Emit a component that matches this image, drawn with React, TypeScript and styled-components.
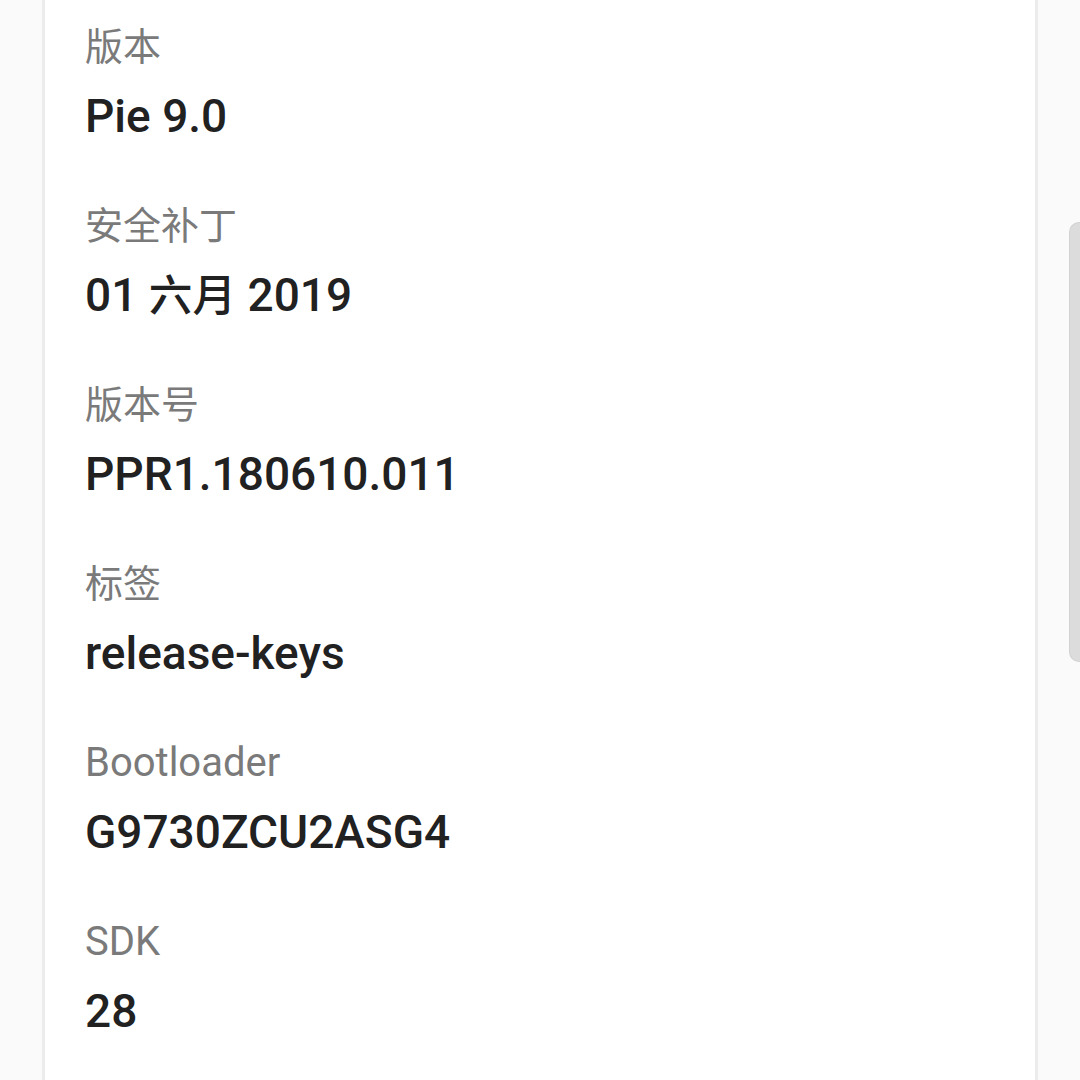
import styled, { createGlobalStyle } from 'styled-components';

const GlobalStyle = createGlobalStyle`
  html, body {
    margin: 0;
    padding: 0;
    background: #fafafa;
    overflow: hidden;
  }
  body {
    font-family: Roboto, "Noto Sans CJK SC", sans-serif;
  }
`;

type Info = { label: string; value: string };

const items: Info[] = [
  { label: '版本', value: 'Pie 9.0' },
  { label: '安全补丁', value: '01 六月 2019' },
  { label: '版本号', value: 'PPR1.180610.011' },
  { label: '标签', value: 'release-keys' },
  { label: 'Bootloader', value: 'G9730ZCU2ASG4' },
  { label: 'SDK', value: '28' },
];

// wrap runs of CJK characters so they can be sized a touch smaller
const renderText = (text: string) =>
  text.split(/([\u4e00-\u9fff]+)/).map((part, i) =>
    /[\u4e00-\u9fff]/.test(part) ? <Cjk key={i}>{part}</Cjk> : part
  );

export default function App() {
  return (
    <>
      <GlobalStyle />
      <Screen>
        <Card>
          {items.map((item) => (
            <Item key={item.label}>
              <Label>{renderText(item.label)}</Label>
              <Value>{renderText(item.value)}</Value>
            </Item>
          ))}
        </Card>
        <ScrollThumb />
      </Screen>
    </>
  );
}

const Screen = styled.div`
  position: relative;
  width: 1080px;
  height: 1080px;
  overflow: hidden;
  padding-left: 42px;
  box-sizing: border-box;
`;

const Card = styled.div`
  width: 996px;
  min-height: 1080px;
  box-sizing: border-box;
  background: #ffffff;
  border-left: 3px solid #ececec;
  border-right: 3px solid #ececec;
  padding: 23px 40px 0 40px;
`;

const Item = styled.div`
  display: flex;
  flex-direction: column;
  padding-bottom: 58px;
`;

const Label = styled.div`
  height: 48px;
  font-size: 40px;
  line-height: 48px;
  color: #7a7a7a;
  font-weight: 400;
  white-space: nowrap;
`;

const Value = styled.div`
  height: 56px;
  margin-top: 17px;
  font-size: 46px;
  line-height: 56px;
  color: #212121;
  font-weight: 500;
  white-space: nowrap;
`;

const Cjk = styled.span`
  font-family: "Noto Sans CJK SC", sans-serif;
  font-size: 0.95em;
  line-height: 1;
`;

const ScrollThumb = styled.div`
  position: absolute;
  top: 222px;
  right: 0;
  width: 11px;
  height: 440px;
  background: #dcdcdc;
  border: 1px solid #d2d2d2;
  border-right: none;
  border-radius: 10px 0 0 10px;
  box-sizing: border-box;
`;
